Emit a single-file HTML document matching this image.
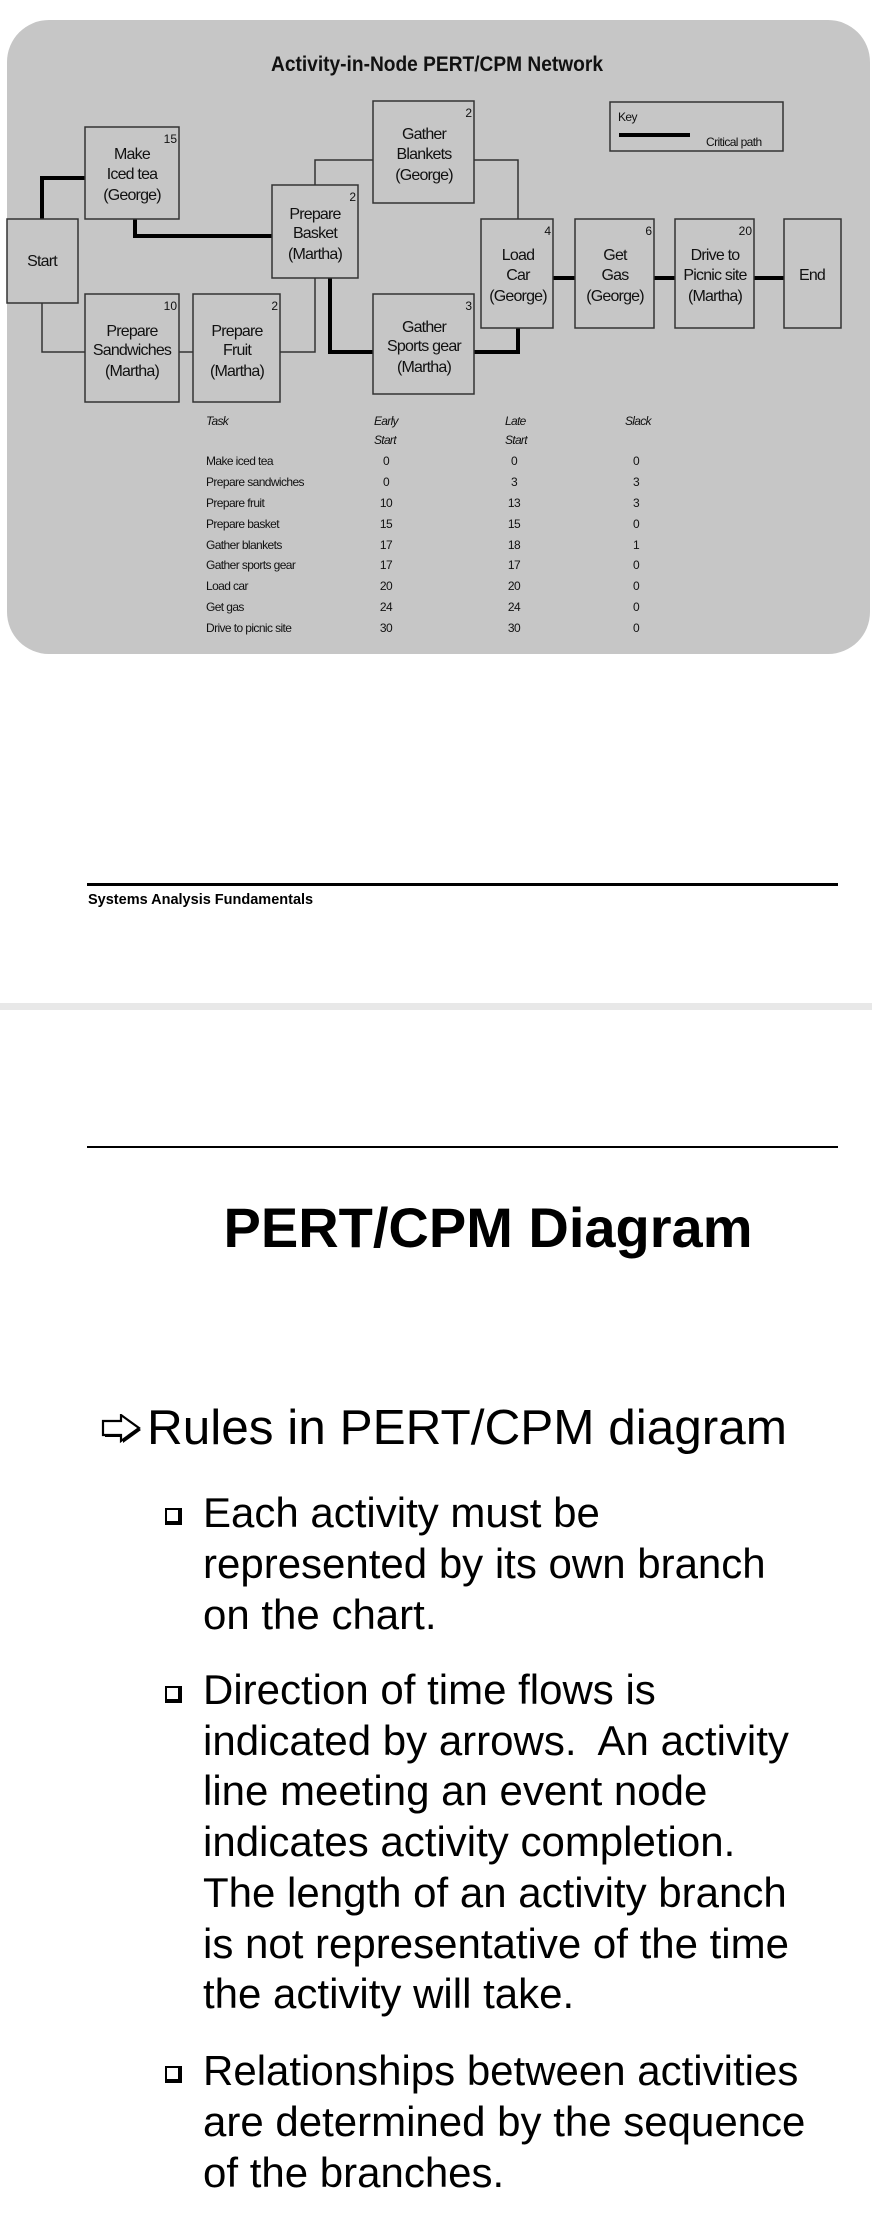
<!DOCTYPE html>
<html><head><meta charset="utf-8"><style>
html,body{margin:0;padding:0;background:#fff;}
body{width:872px;height:2232px;position:relative;overflow:hidden;font-family:"Liberation Sans",Arial,sans-serif;}
.a{position:absolute;white-space:pre;}
</style></head><body>
<svg class="a" style="left:0;top:0" width="872" height="670" viewBox="0 0 872 670">
<rect x="7" y="20" width="863" height="634" rx="42" ry="42" fill="#c6c6c6"/>
<g font-family="Liberation Sans, Arial, sans-serif" fill="#111">
<text x="271" y="71" font-size="21" font-weight="bold" textLength="332" lengthAdjust="spacingAndGlyphs">Activity-in-Node PERT/CPM Network</text>
</g>
<g stroke="#333" stroke-width="1.5" fill="none">
<polyline points="42,303 42,352 85,352"/>
<line x1="179" y1="352" x2="193" y2="352"/>
<polyline points="280,352 315,352 315,278"/>
<polyline points="315,185 315,160 373,160"/>
<polyline points="474,160 518,160 518,219"/>
</g>
<g stroke="#000" stroke-width="4" fill="none">
<polyline points="42,219 42,178 85,178"/>
<polyline points="135,219 135,236 272,236"/>
<polyline points="330,278 330,352 373,352"/>
<polyline points="474,352 518,352 518,328"/>
<line x1="553" y1="278" x2="575" y2="278"/>
<line x1="654" y1="278" x2="675" y2="278"/>
<line x1="754" y1="278" x2="784" y2="278"/>
</g>
<g stroke="#333" stroke-width="1.5" fill="#c6c6c6">
<rect x="7" y="219" width="71" height="84"/>
<rect x="85" y="127" width="94" height="92"/>
<rect x="85" y="294" width="94" height="108"/>
<rect x="193" y="294" width="87" height="108"/>
<rect x="272" y="185" width="86" height="93"/>
<rect x="373" y="101" width="101" height="102"/>
<rect x="373" y="294" width="101" height="100"/>
<rect x="481" y="219" width="72" height="109"/>
<rect x="575" y="219" width="79" height="109"/>
<rect x="675" y="219" width="79" height="109"/>
<rect x="784" y="219" width="57" height="109"/>
<rect x="610" y="102" width="173" height="49" fill="none"/>
</g>
<g stroke="#000" stroke-width="4"><line x1="619" y1="135" x2="690" y2="135"/></g>
<g font-family="Liberation Sans, Arial, sans-serif" fill="#111" font-size="16" text-anchor="middle" letter-spacing="-0.8">
<text x="42" y="266">Start</text>
<text x="132" y="159">Make</text><text x="132" y="179">Iced tea</text><text x="132" y="200">(George)</text>
<text x="132" y="336">Prepare</text><text x="132" y="355">Sandwiches</text><text x="132" y="376">(Martha)</text>
<text x="237" y="336">Prepare</text><text x="237" y="355">Fruit</text><text x="237" y="376">(Martha)</text>
<text x="315" y="219">Prepare</text><text x="315" y="238">Basket</text><text x="315" y="259">(Martha)</text>
<text x="424" y="139">Gather</text><text x="424" y="159">Blankets</text><text x="424" y="180">(George)</text>
<text x="424" y="332">Gather</text><text x="424" y="351">Sports gear</text><text x="424" y="372">(Martha)</text>
<text x="518" y="260">Load</text><text x="518" y="280">Car</text><text x="518" y="301">(George)</text>
<text x="615" y="260">Get</text><text x="615" y="280">Gas</text><text x="615" y="301">(George)</text>
<text x="715" y="260">Drive to</text><text x="715" y="280">Picnic site</text><text x="715" y="301">(Martha)</text>
<text x="812" y="280">End</text>
</g>
<g font-family="Liberation Sans, Arial, sans-serif" fill="#111" font-size="12" text-anchor="end">
<text x="177" y="143">15</text><text x="177" y="310">10</text><text x="278" y="310">2</text>
<text x="356" y="201">2</text><text x="472" y="117">2</text><text x="472" y="310">3</text>
<text x="551" y="235">4</text><text x="652" y="235">6</text><text x="752" y="235">20</text>
</g>
<g font-family="Liberation Sans, Arial, sans-serif" fill="#111" font-size="12" letter-spacing="-0.6">
<text x="618" y="121">Key</text><text x="706" y="146">Critical path</text>
</g>
<g font-family="Liberation Sans, Arial, sans-serif" fill="#111" font-size="12" letter-spacing="-0.7" font-style="italic">
<text x="206" y="425">Task</text>
<text x="374" y="425">Early</text><text x="374" y="444">Start</text>
<text x="505" y="425">Late</text><text x="505" y="444">Start</text>
<text x="625" y="425">Slack</text>
</g>
<g font-family="Liberation Sans, Arial, sans-serif" fill="#111" font-size="12" letter-spacing="-0.6">
<g><text x="206" y="465">Make iced tea</text><text x="206" y="486">Prepare sandwiches</text><text x="206" y="507">Prepare fruit</text><text x="206" y="528">Prepare basket</text><text x="206" y="549">Gather blankets</text><text x="206" y="569">Gather sports gear</text><text x="206" y="590">Load car</text><text x="206" y="611">Get gas</text><text x="206" y="632">Drive to picnic site</text></g>
<g text-anchor="middle">
<text x="386" y="465">0</text><text x="386" y="486">0</text><text x="386" y="507">10</text><text x="386" y="528">15</text><text x="386" y="549">17</text><text x="386" y="569">17</text><text x="386" y="590">20</text><text x="386" y="611">24</text><text x="386" y="632">30</text>
<text x="514" y="465">0</text><text x="514" y="486">3</text><text x="514" y="507">13</text><text x="514" y="528">15</text><text x="514" y="549">18</text><text x="514" y="569">17</text><text x="514" y="590">20</text><text x="514" y="611">24</text><text x="514" y="632">30</text>
<text x="636" y="465">0</text><text x="636" y="486">3</text><text x="636" y="507">3</text><text x="636" y="528">0</text><text x="636" y="549">1</text><text x="636" y="569">0</text><text x="636" y="590">0</text><text x="636" y="611">0</text><text x="636" y="632">0</text>
</g></g>
</svg>

<div class="a" style="left:87px;top:883px;width:751px;height:3px;background:#000"></div>
<div class="a" style="left:88px;top:892px;font-size:14.5px;font-weight:bold;">Systems Analysis Fundamentals</div>

<div class="a" style="left:0;top:1003px;width:872px;height:7px;background:#e8e8e8"></div>

<div class="a" style="left:87px;top:1146px;width:751px;height:2px;background:#000"></div>
<div class="a" style="left:0;top:1193px;width:976px;text-align:center;font-size:56px;font-weight:bold;line-height:70px;">PERT/CPM Diagram</div>

<svg class="a" style="left:101px;top:1414px" width="44" height="34" viewBox="0 0 44 34">
<path d="M4 9 H22 V3 L40 16 L22 29 V23 H4 Z" fill="#000"/>
<path d="M2 7 H20 V1 L38 14 L20 27 V21 H2 Z" fill="#fff" stroke="#000" stroke-width="2.2" stroke-linejoin="miter"/>
</svg>
<div class="a" style="left:147px;top:1398px;font-size:49.5px;line-height:60px;">Rules in PERT/CPM diagram</div>

<div class="a" style="left:165px;top:1508px;width:17px;height:17px;border:2px solid #000;border-right-width:4px;border-bottom-width:4px;box-sizing:border-box;"></div>
<div class="a" style="left:203px;top:1487px;font-size:42px;line-height:51px;">Each activity must be
represented by its own branch
on the chart.</div>

<div class="a" style="left:165px;top:1686px;width:17px;height:17px;border:2px solid #000;border-right-width:4px;border-bottom-width:4px;box-sizing:border-box;"></div>
<div class="a" style="left:203px;top:1665px;font-size:42px;line-height:50.7px;">Direction of time flows is
indicated by arrows.  An activity
line meeting an event node
indicates activity completion.
The length of an activity branch
is not representative of the time
the activity will take.</div>

<div class="a" style="left:165px;top:2066px;width:17px;height:17px;border:2px solid #000;border-right-width:4px;border-bottom-width:4px;box-sizing:border-box;"></div>
<div class="a" style="left:203px;top:2045px;font-size:42px;line-height:51px;">Relationships between activities
are determined by the sequence
of the branches.</div>
</body></html>
